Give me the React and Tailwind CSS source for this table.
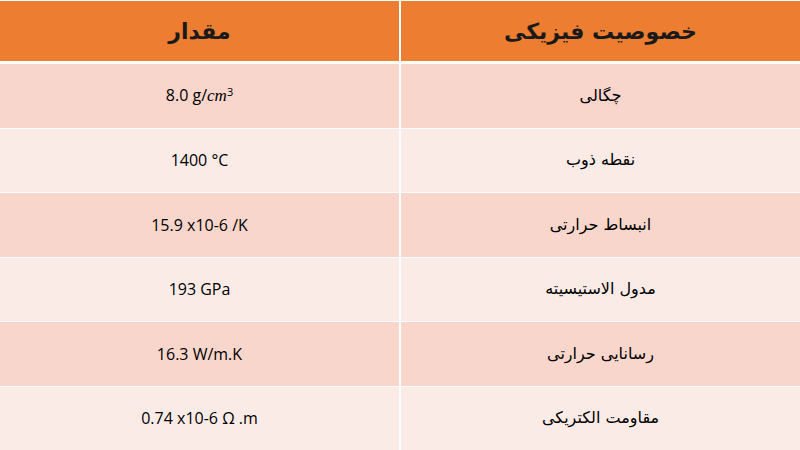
import React from "react";

const rows = [
  { name: "چگالی", value: <span>8.0 g/<i className="font-['Liberation_Serif',serif] text-[17px]">cm</i><sup className="text-[11px]">3</sup></span> },
  { name: "نقطه ذوب", value: "1400 °C" },
  { name: "انبساط حرارتی", value: "15.9 x10-6 /K" },
  { name: "مدول الاستیسیته", value: "193 GPa" },
  { name: "رسانایی حرارتی", value: "16.3 W/m.K" },
  { name: "مقاومت الکتریکی", value: "0.74 x10-6 Ω .m" },
];

export default function App() {
  return (
    <div className="w-[800px] h-[450px] bg-white overflow-hidden flex flex-col font-['DejaVu_Sans',sans-serif]" dir="rtl">
      <div className="grid grid-cols-2 gap-x-[2px] h-[61px] pt-[1px] bg-white shrink-0">
        <div className="bg-[#ed7d31] flex items-center justify-center text-[22px] font-bold text-[#1a1a1a]">
          خصوصیت فیزیکی
        </div>
        <div className="bg-[#ed7d31] flex items-center justify-center text-[22px] font-bold text-[#1a1a1a]">
          مقدار
        </div>
      </div>
      <div className="flex-1 flex flex-col gap-[1px] mt-[3px]">
        {rows.map((r, i) => (
          <div key={i} className="flex-1 grid grid-cols-2 gap-x-[2px]">
            <div className={`${i % 2 === 0 ? "bg-[#f8d6cb]" : "bg-[#fbebe7]"} flex items-center justify-center text-[16px] text-black`}>
              {r.name}
            </div>
            <div dir="ltr" className={`${i % 2 === 0 ? "bg-[#f8d6cb]" : "bg-[#fbebe7]"} flex items-center justify-center text-[16px] text-black font-['Open_Sans',sans-serif]`}>
              {r.value}
            </div>
          </div>
        ))}
      </div>
    </div>
  );
}
